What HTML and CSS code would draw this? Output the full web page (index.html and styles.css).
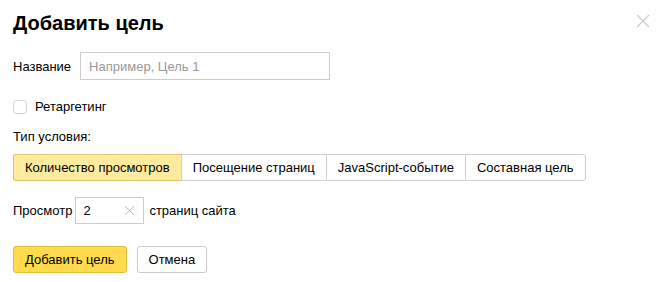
FILE: index.html
```html
<!DOCTYPE html>
<html lang="ru">
<head>
    <meta charset="UTF-8">
    <title>Добавить цель</title>
    <link rel="stylesheet" href="styles.css">
</head>
<body>
    <div class="dialog">
        <div class="header">
            <h1>Добавить цель</h1>
            <span class="close">
                <svg width="14" height="14" viewBox="0 0 14 14"><path d="M1 1L13 13M13 1L1 13" stroke="#ccc" stroke-width="1.3"/></svg>
            </span>
        </div>

        <div class="row name-row">
            <label class="label">Название</label>
            <input type="text" class="text-input" placeholder="Например, Цель 1">
        </div>

        <label class="checkbox-row">
            <span class="checkbox"></span>
            Ретаргетинг
        </label>

        <div class="cond-title">Тип условия:</div>
        <div class="tabs">
            <span class="tab active">Количество просмотров</span>
            <span class="tab">Посещение страниц</span>
            <span class="tab">JavaScript-событие</span>
            <span class="tab">Составная цель</span>
        </div>

        <div class="row views-row">
            <span>Просмотр</span>
            <span class="small-input">
                <span class="value">2</span>
                <svg width="11" height="11" viewBox="0 0 11 11"><path d="M1 1L10 10M10 1L1 10" stroke="#bbb" stroke-width="1"/></svg>
            </span>
            <span>страниц сайта</span>
        </div>

        <div class="buttons">
            <button class="btn primary">Добавить цель</button>
            <button class="btn">Отмена</button>
        </div>
    </div>
</body>
</html>
```

FILE: styles.css
```css
body {
    margin: 0;
    font-family: "Liberation Sans", Arial, sans-serif;
    font-size: 13px;
    color: #000;
    background: #fff;
}

.dialog {
    padding: 10px 13px;
}

.header {
    display: flex;
    justify-content: space-between;
    align-items: flex-start;
}

h1 {
    margin: 0;
    font-size: 20px;
    font-weight: bold;
    line-height: 26px;
}

.close {
    margin-top: 4px;
    margin-right: -7px;
}

.row {
    display: flex;
    align-items: center;
}

.name-row {
    margin-top: 16px;
}

.label {
    margin-right: 9px;
}

.text-input {
    width: 250px;
    height: 28px;
    box-sizing: border-box;
    border: 1px solid #ccc;
    padding: 0 8px;
    font-family: inherit;
    font-size: 13px;
    outline: none;
}

.text-input::placeholder {
    color: #999;
}

.checkbox-row {
    display: flex;
    align-items: center;
    margin-top: 19px;
}

.checkbox {
    width: 12px;
    height: 12px;
    border: 1px solid #d4d4d4;
    border-radius: 3px;
    margin-right: 8px;
}

.cond-title {
    margin-top: 15px;
}

.tabs {
    display: inline-flex;
    margin-top: 10px;
    border: 1px solid #d0d0d0;
    border-radius: 3px;
}

.tab {
    height: 25px;
    line-height: 25px;
    padding: 0 11px;
    border-left: 1px solid #d0d0d0;
}

.tab:first-child {
    border-left: none;
    border-radius: 2px 0 0 2px;
}

.tab.active {
    background: #ffeba0;
    box-shadow: 0 0 0 1px #e0c46a;
}

.views-row {
    margin-top: 16px;
}

.small-input {
    display: inline-flex;
    align-items: center;
    justify-content: space-between;
    width: 69px;
    height: 27px;
    box-sizing: border-box;
    border: 1px solid #ccc;
    padding: 0 8px 0 7px;
    margin: 0 5px 0 3px;
}

.buttons {
    display: flex;
    gap: 10px;
    margin-top: 22px;
}

.btn {
    height: 27px;
    padding: 0 11px;
    font-family: inherit;
    font-size: 13px;
    color: #000;
    background: #fff;
    border: 1px solid #ccc;
    border-radius: 3px;
}

.btn.primary {
    background: #ffdb4d;
    border-color: #e2bc3a;
}
```
